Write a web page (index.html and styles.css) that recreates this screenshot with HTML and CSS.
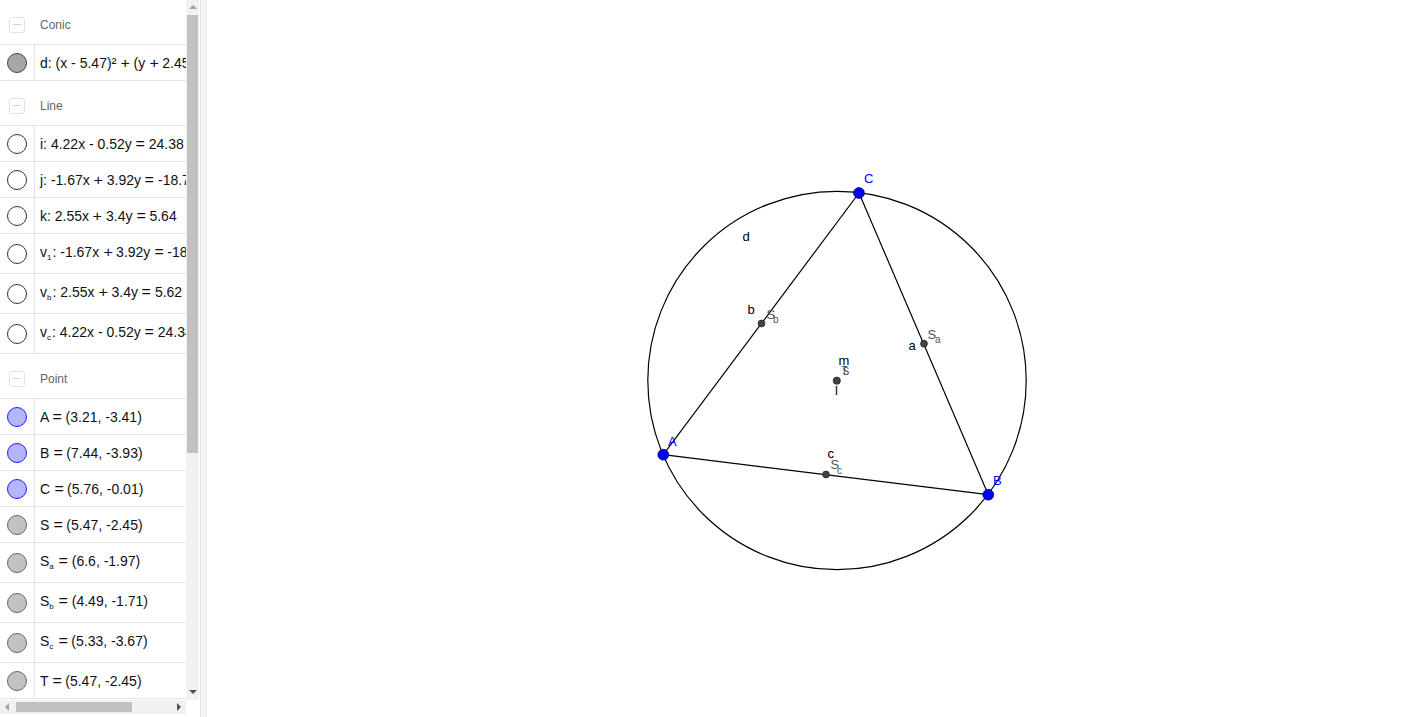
FILE: index.html
```html
<!DOCTYPE html>
<html>
<head>
<meta charset="utf-8">
<link rel="stylesheet" href="styles.css">
</head>
<body>
<div class="app">
  <div class="algebra">
    <div class="viewport">
      <div class="list">
        <div class="header"><span class="collapse"></span><span class="htitle">Conic</span></div>
        <div class="item"><span class="marker"><span class="dot conic"></span></span><span class="expr">d: (x - 5.47)<span class="sq">²</span> <span class="op">+</span> (y <span class="op">+</span> 2.45)<span class="sq">²</span> <span class="op">=</span> 35.82</span></div>

        <div class="header"><span class="collapse"></span><span class="htitle">Line</span></div>
        <div class="item"><span class="marker"><span class="dot line"></span></span><span class="expr">i: 4.22x - 0.52y <span class="op">=</span> 24.38</span></div>
        <div class="item"><span class="marker"><span class="dot line"></span></span><span class="expr">j: -1.67x <span class="op">+</span> 3.92y <span class="op">=</span> -18.72</span></div>
        <div class="item"><span class="marker"><span class="dot line"></span></span><span class="expr">k: 2.55x <span class="op">+</span> 3.4y <span class="op">=</span> 5.64</span></div>
        <div class="item tall"><span class="marker"><span class="dot line"></span></span><span class="expr">v<span class="sub">1</span>: -1.67x <span class="op">+</span> 3.92y <span class="op">=</span> -18.73</span></div>
        <div class="item tall"><span class="marker"><span class="dot line"></span></span><span class="expr">v<span class="sub">b</span>: 2.55x <span class="op">+</span> 3.4y <span class="op">=</span> 5.62</span></div>
        <div class="item tall"><span class="marker"><span class="dot line"></span></span><span class="expr">v<span class="sub">c</span>: 4.22x - 0.52y <span class="op">=</span> 24.34</span></div>

        <div class="header"><span class="collapse"></span><span class="htitle">Point</span></div>
        <div class="item"><span class="marker"><span class="dot free"></span></span><span class="expr">A <span class="op">=</span> (3.21, -3.41)</span></div>
        <div class="item"><span class="marker"><span class="dot free"></span></span><span class="expr">B <span class="op">=</span> (7.44, -3.93)</span></div>
        <div class="item"><span class="marker"><span class="dot free"></span></span><span class="expr">C <span class="op">=</span> (5.76, -0.01)</span></div>
        <div class="item"><span class="marker"><span class="dot dep"></span></span><span class="expr">S <span class="op">=</span> (5.47, -2.45)</span></div>
        <div class="item tall"><span class="marker"><span class="dot dep"></span></span><span class="expr">S<span class="sub">a</span> <span class="op">=</span> (6.6, -1.97)</span></div>
        <div class="item tall"><span class="marker"><span class="dot dep"></span></span><span class="expr">S<span class="sub">b</span> <span class="op">=</span> (4.49, -1.71)</span></div>
        <div class="item tall"><span class="marker"><span class="dot dep"></span></span><span class="expr">S<span class="sub">c</span> <span class="op">=</span> (5.33, -3.67)</span></div>
        <div class="item"><span class="marker"><span class="dot dep"></span></span><span class="expr">T <span class="op">=</span> (5.47, -2.45)</span></div>
      </div>
    </div>
    <div class="vscroll">
      <span class="arrow up"></span>
      <div class="vtrack"><div class="vthumb"></div></div>
      <span class="arrow down"></span>
    </div>
    <div class="hscroll">
      <span class="arrow left"></span>
      <div class="htrack"><div class="hthumb"></div></div>
      <span class="arrow right"></span>
    </div>
    <div class="corner"></div>
  </div>
  <div class="divider"></div>
  <div class="canvas">
    <svg class="drawing" width="1219" height="717" viewBox="207 0 1219 717" xmlns="http://www.w3.org/2000/svg">
      <circle cx="837" cy="380.5" r="189.2" fill="none" stroke="#000" stroke-width="1.2"/>
      <line x1="663.3" y1="454.7" x2="859" y2="193" stroke="#000" stroke-width="1.2"/>
      <line x1="859" y1="193" x2="988.3" y2="494.7" stroke="#000" stroke-width="1.2"/>
      <line x1="663.3" y1="454.7" x2="988.3" y2="494.7" stroke="#000" stroke-width="1.2"/>

      <circle cx="761.5" cy="323.5" r="3.4" fill="#444" stroke="#222" stroke-width="0.8"/>
      <circle cx="924" cy="343.7" r="3.4" fill="#444" stroke="#222" stroke-width="0.8"/>
      <circle cx="826" cy="474.5" r="3.4" fill="#444" stroke="#222" stroke-width="0.8"/>
      <circle cx="836.8" cy="380.7" r="3.6" fill="#444" stroke="#222" stroke-width="0.8"/>

      <circle cx="663.3" cy="454.7" r="5.4" fill="#0000ff" stroke="#000066" stroke-width="0.8"/>
      <circle cx="988.3" cy="494.7" r="5.4" fill="#0000ff" stroke="#000066" stroke-width="0.8"/>
      <circle cx="859" cy="193" r="5.4" fill="#0000ff" stroke="#000066" stroke-width="0.8"/>

      <g class="lbl-blue">
        <text x="864" y="183">C</text>
        <text x="668" y="446">A</text>
        <text x="993" y="485">B</text>
      </g>
      <g class="lbl-black">
        <text x="742.5" y="241">d</text>
        <text x="747.5" y="314">b</text>
        <text x="908.5" y="350">a</text>
        <text x="827.5" y="458">c</text>
        <text x="838.5" y="365">m</text>
        <text x="835" y="395">l</text>
      </g>
      <g class="lbl-gray">
        <text x="927.5" y="338.5">S</text><text class="subl" x="935" y="343">a</text>
        <text x="766.5" y="319">S</text><text class="subl" x="773" y="323">b</text>
        <text x="830.5" y="469">S</text><text class="subl" x="837" y="474">c</text>
        <text class="tiny" x="841.5" y="374">T</text><text class="tiny" x="842.5" y="374.5">S</text>
      </g>
    </svg>
  </div>
</div>
</body>
</html>
```
FILE: styles.css
```css
* { box-sizing: border-box; }
html, body { margin: 0; padding: 0; background: #fff; }
body { width: 1426px; height: 717px; overflow: hidden; font-family: "Liberation Sans", Arial, sans-serif; }

.app { display: flex; width: 1426px; height: 717px; }

.algebra {
  display: grid;
  grid-template-columns: 186px 13px;
  grid-template-rows: 700px 14px 3px;
  width: 199px;
  flex: 0 0 199px;
}

.viewport { overflow: hidden; grid-column: 1; grid-row: 1; }
.list { width: 260px; }

.header {
  height: 45px;
  display: flex;
  align-items: center;
  padding-top: 5px;
  border-bottom: 1px solid #e3e3e3;
}
.collapse {
  width: 16px; height: 16px;
  margin-left: 9px;
  margin-right: 15px;
  border: 1px solid #e2e2e2;
  border-radius: 3px;
  display: flex; align-items: center; justify-content: center;
}
.collapse::before { content: ""; width: 8px; height: 1.5px; background: #d3d3d3; }
.htitle { font-size: 12px; color: #666; }

.item {
  height: 36px;
  display: flex;
  align-items: stretch;
  border-bottom: 1px solid #e3e3e3;
}
.item.tall { height: 40px; }
.marker {
  width: 35px;
  flex: 0 0 35px;
  border-right: 1px solid #e3e3e3;
  display: flex; align-items: center; justify-content: flex-start;
  padding-left: 7px;
}
.dot { width: 20px; height: 20px; border-radius: 50%; display: block; }
.dot.conic { background: #a6a6a6; border: 1px solid #444; }
.dot.line { background: #fff; border: 1px solid #333; }
.dot.free { background: #b4b4ff; border: 1px solid #2020ff; }
.dot.dep { background: #c2c2c2; border: 1px solid #666; }

.expr {
  display: block;
  align-self: center;
  padding-left: 5px;
  font-size: 14px;
  line-height: 18px;
  color: #111;
  white-space: pre;
}
.op { display: inline-block; transform: scaleX(1.15); margin: 0 0.5px; }
.sq { font-size: 15px; }
.sub { font-size: 8px; position: relative; top: 3px; margin-right: 1px; }

.vscroll {
  grid-column: 2; grid-row: 1;
  background: #f1f1f1;
  display: flex; flex-direction: column; align-items: center;
}
.vtrack { flex: 1; width: 100%; padding: 0 1px; }
.vthumb { width: 11px; height: 438px; background: #c1c1c1; }
.hscroll {
  grid-column: 1; grid-row: 2;
  background: #f1f1f1;
  display: flex; align-items: center;
}
.htrack { flex: 1; height: 100%; padding: 2px 0; }
.hthumb { width: 116px; height: 10px; background: #c1c1c1; margin-left: 1px; }
.corner { grid-column: 2; grid-row: 2; background: #fff; }

.arrow { width: 0; height: 0; display: block; flex: 0 0 auto; }
.arrow.up { border-left: 4px solid transparent; border-right: 4px solid transparent; border-bottom: 4px solid #a3a3a3; margin: 5px 0 6px; }
.arrow.down { border-left: 4px solid transparent; border-right: 4px solid transparent; border-top: 4px solid #505050; margin: 5px 0 6px; }
.arrow.left { border-top: 4px solid transparent; border-bottom: 4px solid transparent; border-right: 4px solid #a3a3a3; margin: 0 6px 0 5px; }
.arrow.right { border-top: 4px solid transparent; border-bottom: 4px solid transparent; border-left: 4px solid #505050; margin: 0 5px 0 6px; }

.divider {
  flex: 0 0 8px;
  border-left: 1px solid #fff;
  background: #f4f4f4;
  box-shadow: inset 1px 0 0 #e4e4e4, inset -1px 0 0 #ececec;
}

.canvas { flex: 1; position: relative; overflow: hidden; }
.drawing { display: block; }
.drawing text { font-family: "Liberation Sans", Arial, sans-serif; font-size: 13px; }
.lbl-blue text { fill: #0000ff; }
.lbl-black text { fill: #000; }
.lbl-gray text { fill: #555; }
.drawing text.subl { font-size: 10px; }
.drawing text.tiny { font-size: 10px; fill: #444; }
```
